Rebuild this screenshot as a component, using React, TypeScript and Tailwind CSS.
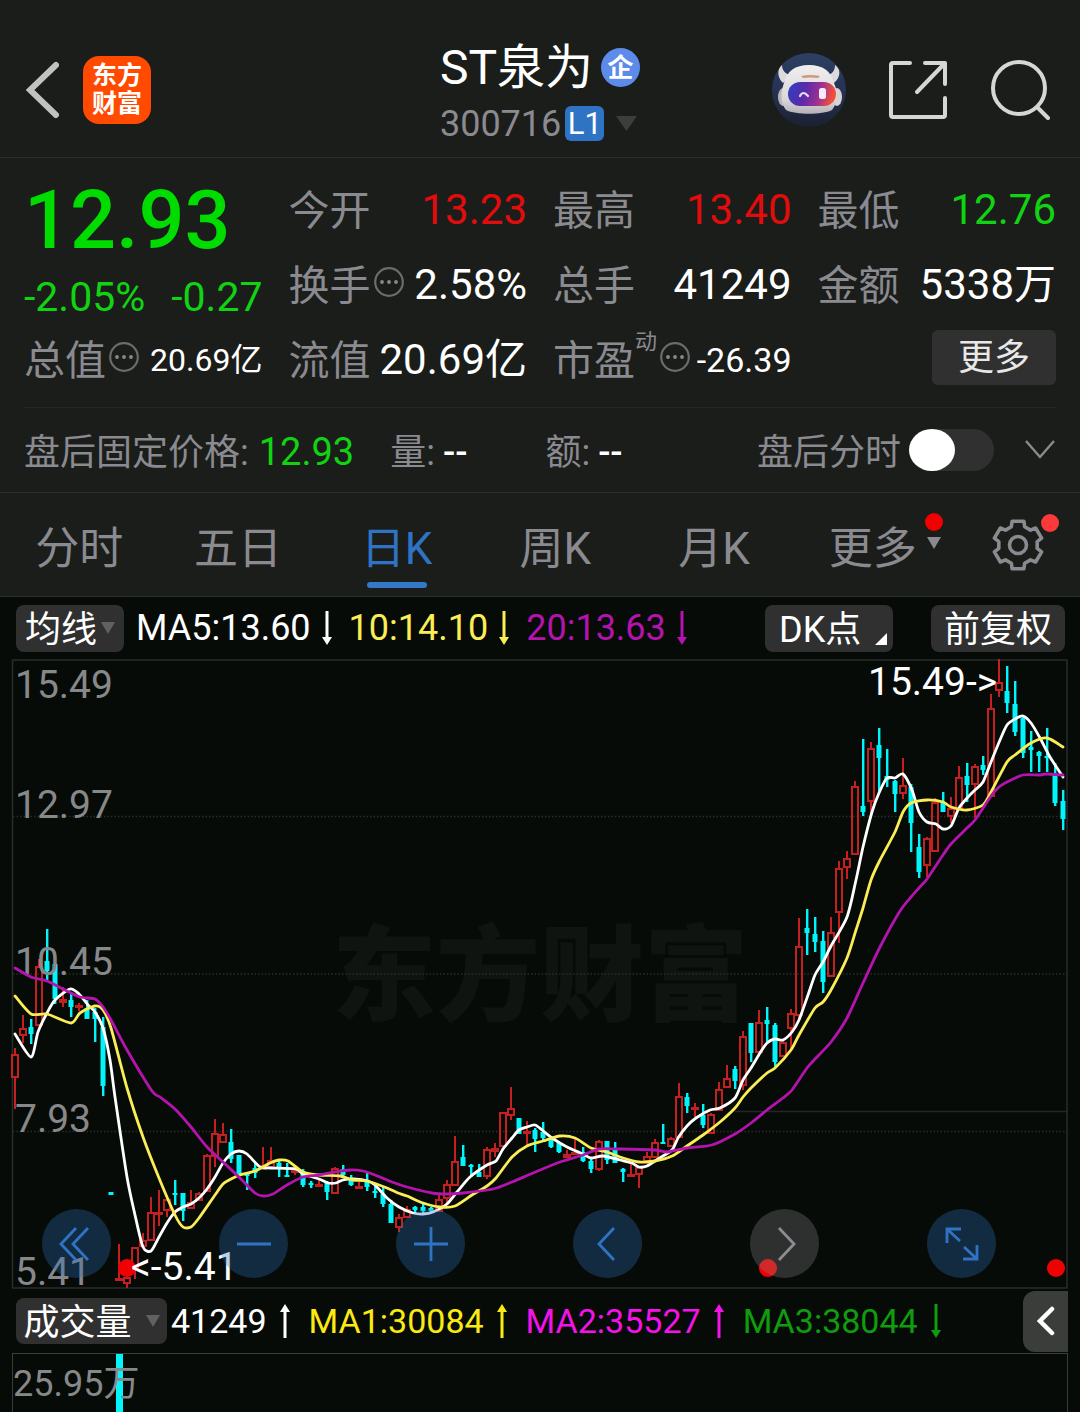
import { useState } from "react";
import type { ReactNode } from "react";

/* Each candle: kind (r = rise, c = fall), high, body top, body bottom, low */
type Candle = [string, number, number, number, number];

const CANDLES: Candle[] = [
  ["r", 1048, 1054, 1078, 1109], ["r", 1015, 1028, 1036, 1043], ["c", 1019, 1027, 1034, 1044],
  ["r", 959, 966, 1026, 1026], ["c", 929, 961, 971, 980], ["c", 964, 964, 999, 1004],
  ["r", 987, 999, 1003, 1007], ["c", 993, 1000, 1007, 1017], ["r", 1003, 1005, 1008, 1011],
  ["c", 1000, 1008, 1019, 1019], ["c", 1008, 1012, 1019, 1042], ["c", 1017, 1027, 1086, 1096],
  ["c", 1192, 1192, 1195, 1195], ["r", 1244, 1278, 1281, 1281], ["r", 1259, 1277, 1284, 1288],
  ["r", 1247, 1247, 1270, 1279], ["r", 1233, 1240, 1247, 1247], ["r", 1197, 1212, 1241, 1241],
  ["r", 1190, 1212, 1214, 1226], ["r", 1195, 1199, 1211, 1217], ["c", 1180, 1193, 1195, 1205],
  ["c", 1193, 1193, 1211, 1221], ["r", 1190, 1202, 1209, 1209], ["r", 1192, 1193, 1201, 1201],
  ["r", 1154, 1155, 1192, 1192], ["r", 1119, 1133, 1157, 1167], ["r", 1123, 1134, 1143, 1143],
  ["c", 1129, 1142, 1159, 1163], ["c", 1155, 1155, 1175, 1175], ["c", 1173, 1174, 1176, 1190],
  ["c", 1163, 1168, 1173, 1178], ["r", 1147, 1165, 1169, 1169], ["r", 1147, 1160, 1168, 1168],
  ["c", 1160, 1163, 1168, 1177], ["c", 1163, 1175, 1177, 1177], ["r", 1167, 1170, 1172, 1175],
  ["c", 1169, 1173, 1185, 1187], ["c", 1181, 1183, 1185, 1188], ["r", 1180, 1184, 1186, 1187],
  ["c", 1181, 1182, 1192, 1200], ["r", 1167, 1168, 1194, 1194], ["c", 1165, 1169, 1175, 1178],
  ["c", 1175, 1178, 1185, 1186], ["r", 1182, 1186, 1189, 1189], ["c", 1173, 1181, 1187, 1191],
  ["c", 1185, 1191, 1193, 1198], ["c", 1187, 1194, 1204, 1207], ["c", 1200, 1204, 1223, 1223],
  ["r", 1214, 1217, 1228, 1232], ["r", 1206, 1209, 1218, 1218], ["c", 1206, 1207, 1210, 1213],
  ["c", 1203, 1207, 1211, 1213], ["c", 1207, 1208, 1211, 1212], ["r", 1194, 1199, 1212, 1212],
  ["r", 1180, 1184, 1199, 1203], ["r", 1136, 1161, 1186, 1186], ["c", 1145, 1157, 1166, 1166],
  ["c", 1164, 1165, 1167, 1177], ["c", 1164, 1172, 1177, 1177], ["r", 1147, 1149, 1177, 1179],
  ["r", 1143, 1148, 1152, 1157], ["r", 1112, 1112, 1147, 1147], ["r", 1087, 1108, 1116, 1120],
  ["c", 1118, 1118, 1134, 1134], ["r", 1121, 1131, 1134, 1145], ["c", 1128, 1130, 1139, 1152],
  ["c", 1122, 1132, 1138, 1140], ["c", 1136, 1140, 1147, 1148], ["c", 1142, 1143, 1152, 1153],
  ["r", 1150, 1154, 1158, 1158], ["r", 1139, 1152, 1155, 1155], ["c", 1147, 1152, 1161, 1162],
  ["c", 1158, 1161, 1169, 1173], ["r", 1140, 1141, 1170, 1171], ["c", 1141, 1141, 1160, 1164],
  ["c", 1142, 1150, 1163, 1163], ["c", 1168, 1169, 1172, 1182], ["r", 1164, 1174, 1177, 1177],
  ["r", 1167, 1167, 1175, 1188], ["r", 1152, 1156, 1162, 1162], ["r", 1139, 1142, 1158, 1158],
  ["c", 1124, 1142, 1144, 1144], ["r", 1137, 1138, 1147, 1147], ["r", 1083, 1096, 1138, 1138],
  ["c", 1093, 1097, 1106, 1113], ["r", 1103, 1107, 1109, 1117], ["c", 1104, 1115, 1125, 1128],
  ["r", 1113, 1114, 1134, 1134], ["r", 1082, 1089, 1111, 1111], ["r", 1065, 1078, 1088, 1088],
  ["c", 1066, 1069, 1081, 1089], ["r", 1031, 1036, 1086, 1090], ["c", 1023, 1023, 1053, 1062],
  ["r", 1010, 1022, 1053, 1053], ["c", 1007, 1020, 1024, 1043], ["c", 1023, 1025, 1062, 1067],
  ["r", 1041, 1042, 1057, 1057], ["r", 1009, 1013, 1029, 1050], ["r", 918, 946, 1016, 1018],
  ["c", 909, 928, 933, 955], ["c", 917, 934, 942, 952], ["c", 931, 941, 982, 993],
  ["r", 917, 932, 977, 977], ["r", 861, 868, 913, 943], ["r", 851, 858, 868, 879],
  ["r", 781, 786, 855, 855], ["c", 739, 806, 812, 816], ["r", 742, 748, 802, 813],
  ["c", 728, 745, 758, 792], ["c", 749, 776, 780, 787], ["c", 780, 781, 794, 812],
  ["r", 758, 785, 794, 799], ["c", 784, 787, 823, 852], ["c", 834, 847, 872, 878],
  ["r", 837, 838, 866, 877], ["r", 798, 802, 852, 852], ["c", 792, 802, 812, 812],
  ["r", 797, 808, 817, 823], ["r", 766, 777, 810, 810], ["c", 763, 776, 785, 802],
  ["r", 764, 766, 785, 818], ["c", 756, 765, 770, 775], ["r", 694, 708, 797, 797],
  ["r", 659, 682, 691, 697], ["c", 666, 691, 703, 713], ["c", 681, 704, 732, 736],
  ["c", 717, 718, 753, 758], ["c", 731, 747, 750, 772], ["c", 751, 752, 756, 772],
  ["c", 728, 756, 758, 772], ["c", 763, 775, 803, 806], ["c", 790, 801, 819, 830],
];

const MA5 =
  "15,1034 31,1057 38,1032 47,1013 55,1000 70,989 79,994 88,1005 95,1012 103,1028 110,1060 115,1097 127,1177 135,1215 143,1247 151,1251 159,1237 167,1223 175,1212 183,1207 191,1204 199,1198 207,1189 215,1177 223,1163 231,1154 239,1151 247,1154 260,1167 270,1168 296,1169 303,1174 319,1179 328,1183 336,1183 343,1180 354,1179 368,1181 375,1185 387,1198 399,1207 413,1213 423,1214 433,1212 447,1204 457,1192 470,1177 487,1165 496,1161 503,1149 512,1138 519,1130 527,1127 535,1125 542,1130 552,1138 567,1147 583,1154 591,1158 603,1156 620,1160 632,1163 639,1167 647,1166 658,1159 672,1150 678,1138 687,1126 696,1118 710,1110 720,1108 735,1098 743,1080 751,1068 760,1053 767,1043 775,1039 783,1040 792,1032 799,1020 808,995 815,975 823,962 831,946 847,917 856,880 863,847 872,812 879,793 887,778 895,778 903,774 912,790 919,812 927,822 936,824 943,829 951,826 959,808 968,797 975,790 983,782 991,762 1000,740 1007,725 1015,719 1023,716 1031,723 1040,738 1050,757 1063,777";
const MA10 =
  "15,996 31,1014 47,1014 71,1023 80,1013 95,1006 103,1010 111,1028 127,1088 143,1137 159,1178 175,1215 183,1227 191,1227 199,1218 215,1195 223,1184 233,1178 240,1175 255,1171 270,1163 279,1160 288,1161 303,1172 319,1175 340,1176 353,1180 367,1181 387,1188 398,1193 407,1196 423,1203 440,1207 455,1206 472,1195 487,1186 496,1178 512,1157 527,1146 543,1141 560,1136 575,1138 591,1148 607,1152 623,1158 639,1162 655,1161 672,1156 687,1146 703,1135 720,1122 735,1108 743,1097 751,1088 767,1073 775,1068 791,1050 799,1035 815,1008 823,1002 831,990 847,958 856,930 863,908 871,880 879,862 895,832 903,812 911,803 927,800 943,802 951,807 967,810 983,805 991,792 1007,762 1015,755 1031,743 1047,738 1063,747";
const MA20 =
  "15,968 31,977 47,981 63,989 80,997 95,999 103,1007 111,1020 127,1050 152,1091 160,1097 175,1109 191,1127 207,1147 223,1162 240,1178 255,1193 263,1196 273,1194 287,1185 303,1177 319,1175 335,1172 350,1170 363,1171 375,1175 392,1182 407,1187 432,1193 447,1194 463,1193 493,1189 512,1182 533,1173 560,1162 583,1155 599,1149 620,1149 655,1150 667,1152 687,1148 712,1145 735,1134 751,1123 767,1110 783,1098 792,1090 807,1068 815,1059 831,1042 847,1018 863,983 880,947 900,911 911,897 919,888 927,879 943,855 951,844 967,828 975,820 991,796 999,787 1007,782 1023,775 1040,775 1047,774 1063,775";

/* Catmull-Rom spline through the listed points */
function smooth(points: string): string {
  const p = points.split(" ").map((s) => s.split(",").map(Number));
  let d = `M${p[0][0]} ${p[0][1]}`;
  for (let i = 0; i < p.length - 1; i++) {
    const a = p[Math.max(i - 1, 0)];
    const b = p[i];
    const c = p[i + 1];
    const e = p[Math.min(i + 2, p.length - 1)];
    d += `C${b[0] + (c[0] - a[0]) / 8} ${b[1] + (c[1] - a[1]) / 8} ${c[0] - (e[0] - b[0]) / 8} ${c[1] - (e[1] - b[1]) / 8} ${c[0]} ${c[1]}`;
  }
  return d;
}

function CandleMark({ candle, x }: { candle: Candle; x: number }) {
  const [kind, high, top, bottom, low] = candle;
  if (kind === "c") {
    return (
      <g fill="#00f6fb">
        <rect x={x - 1} y={high} width="2.4" height={Math.max(low - high, 2)} />
        <rect x={x - 2.5} y={top} width="5" height={Math.max(bottom - top, 2)} />
      </g>
    );
  }
  return (
    <g fill="none" stroke="#c4201f" strokeWidth="2">
      {top > high && <path d={`M${x} ${high}V${top}`} />}
      {low > bottom && <path d={`M${x} ${bottom}V${low}`} />}
      <rect x={x - 3} y={top + 1} width="6" height={Math.max(bottom - top - 2, 1)} />
    </g>
  );
}

function PriceChart() {
  return (
    <svg
      viewBox="12 659 1056 630"
      className="block w-full overflow-visible"
      role="img"
      aria-label="日K线图"
      fontFamily='Roboto, "Noto Sans CJK SC", sans-serif'
    >
      <text x="540" y="1013" textAnchor="middle" fontSize="104" fontWeight="900" fill="#101411">
        东方财富
      </text>
      <g stroke="#292d2a" strokeWidth="1.5" strokeDasharray="1.5 2">
        <path d="M13 816.5H1067M13 974H1067M13 1131.5H1067" />
      </g>
      <path d="M735 1111.5H1067" stroke="#242725" strokeWidth="1.5" />
      <rect x="12.5" y="660" width="1054.5" height="628" fill="none" stroke="#2a2c2a" strokeWidth="1.5" />
      {CANDLES.map((c, i) => (
        <CandleMark key={i} candle={c} x={15 + i * 8} />
      ))}
      <g fontSize="39" fill="#87888a">
        <text x="15" y="698">15.49</text>
        <text x="15" y="818">12.97</text>
        <text x="15" y="975">10.45</text>
        <text x="15" y="1132">7.93</text>
        <text x="15" y="1285">5.41</text>
      </g>
      <g fill="none" strokeWidth="2.8" strokeLinejoin="round" strokeLinecap="round">
        <path d={smooth(MA5)} stroke="#ffffff" />
        <path d={smooth(MA10)} stroke="#fbed55" />
        <path d={smooth(MA20)} stroke="#b413ae" />
      </g>
      <g fill="#f00000">
        <circle cx="127" cy="1268" r="9" />
        <circle cx="768" cy="1268" r="9" />
        <circle cx="1056" cy="1268" r="9" />
      </g>
      <g fontSize="39" fill="#ffffff">
        <text x="868" y="695">15.49-&gt;</text>
        <text x="131" y="1280">&lt;-5.41</text>
      </g>
    </svg>
  );
}

function Robot() {
  return (
    <svg viewBox="0 0 74 74" className="size-[74px]" aria-hidden="true">
      <defs>
        <linearGradient id="sky" x1="0" y1="0" x2="0" y2="1">
          <stop offset="0" stopColor="#2d3f63" />
          <stop offset="0.6" stopColor="#233150" />
          <stop offset="1" stopColor="#1c2030" />
        </linearGradient>
        <linearGradient id="visor" x1="0" y1="0" x2="1" y2="0.15">
          <stop offset="0" stopColor="#2c3fc4" />
          <stop offset="0.4" stopColor="#5a2aa8" />
          <stop offset="0.7" stopColor="#9a2f94" />
          <stop offset="1" stopColor="#f0503c" />
        </linearGradient>
        <linearGradient id="shell" x1="0" y1="0" x2="0" y2="1">
          <stop offset="0" stopColor="#f0eeee" />
          <stop offset="0.7" stopColor="#dcd8da" />
          <stop offset="1" stopColor="#b5b0b6" />
        </linearGradient>
      </defs>
      <circle cx="37" cy="37" r="37" fill="url(#sky)" />
      <path d="M10 12C5 16 5 24 11 30L21 22C14 22 10 18 10 12ZM63 12C69 16 69 24 62 30L53 22C60 22 63 18 63 12Z" fill="#dddade" />
      <ellipse cx="11" cy="44" rx="5" ry="9" fill="#b9b4ba" />
      <ellipse cx="65" cy="44" rx="5" ry="9" fill="#d8d3d6" />
      <path d="M37 12C51 12 59 18 62 30C67 41 65 51 60 57C50 62 24 62 14 57C9 51 8 41 12 30C15 18 23 12 37 12Z" fill="url(#shell)" />
      <rect x="16" y="29" width="48" height="24" rx="12" fill="url(#visor)" />
      <path d="M29 23Q38 21 48 23L46 25Q38 24 31 25Z" fill="#d09a78" />
      <path d="M28 43Q31 37 36 43" fill="none" stroke="#e8dcff" strokeWidth="2.2" strokeLinecap="round" />
      <rect x="47" y="35" width="7" height="11" rx="2.5" fill="#f7eaff" />
    </svg>
  );
}

function Gear() {
  const pts: string[] = [];
  for (let k = 0; k < 6; k++) {
    const mid = -90 + k * 60;
    [[-20, 19.5], [-14, 24.5], [14, 24.5], [20, 19.5]].forEach(([da, r]) => {
      const a = ((mid + da) * Math.PI) / 180;
      pts.push(`${(27 + r * Math.cos(a)).toFixed(1)},${(27 + r * Math.sin(a)).toFixed(1)}`);
    });
  }
  return (
    <svg viewBox="0 0 54 54" className="size-[54px]" fill="none" stroke="#8a8a90" strokeWidth="3.6" strokeLinejoin="round" aria-hidden="true">
      <polygon points={pts.join(" ")} />
      <circle cx="27" cy="27" r="8.5" />
    </svg>
  );
}

function Dots() {
  return (
    <svg viewBox="0 0 30 30" className="mb-[10px] ml-[3px] size-[30px] shrink-0" aria-hidden="true">
      <circle cx="15" cy="15" r="13.8" fill="none" stroke="#6c6c6a" strokeWidth="2.2" />
      <g fill="#8a8a8a">
        <circle cx="8" cy="15" r="1.9" />
        <circle cx="15" cy="15" r="1.9" />
        <circle cx="22" cy="15" r="1.9" />
      </g>
    </svg>
  );
}

function Arrow({ up = false }: { up?: boolean }) {
  return (
    <svg viewBox="0 0 12 34" className="h-[34px] w-3 shrink-0" fill="currentColor" aria-label={up ? "上升" : "下降"}>
      {up ? <path d="M6 0L11 8H7.5V34H4.5V8H1Z" /> : <path d="M6 34L11 26H7.5V0H4.5V26H1Z" />}
    </svg>
  );
}

function Caret({ className }: { className: string }) {
  return (
    <svg viewBox="0 0 14 12" preserveAspectRatio="none" className={className} fill="currentColor" aria-hidden="true">
      <path d="M0 0H14L7 12Z" />
    </svg>
  );
}

function Stat({ label, value, look, info, sup }: { label: string; value: string; look: string; info?: boolean; sup?: string }) {
  return (
    <div className="flex h-[75px] items-center whitespace-nowrap">
      <dt className="flex items-center pt-1 text-[41px] leading-none text-[#8a8a90]">
        {label}
        {sup && <sup className="-top-5 self-center text-[22px] leading-none">{sup}</sup>}
        {info && <Dots />}
      </dt>
      <dd className={`ml-auto leading-none ${look}`}>{value}</dd>
    </div>
  );
}

function Tool({ label, grey, children }: { label: string; grey?: boolean; children: ReactNode }) {
  return (
    <button
      type="button"
      aria-label={label}
      className={`flex size-[69px] items-center justify-center rounded-full ${grey ? "bg-[#888888]/30 text-[#8c8c92]" : "bg-[#2f6fb8]/32 text-[#2f74c4]"}`}
    >
      <svg viewBox="0 0 36 36" className="size-9" fill="none" stroke="currentColor" strokeWidth="2.8" aria-hidden="true">
        {children}
      </svg>
    </button>
  );
}

const TABS = ["分时", "五日", "日K", "周K", "月K"];

export default function App() {
  const [tab, setTab] = useState("日K");
  const [afterHours, setAfterHours] = useState(false);

  return (
    <div className="flex min-h-screen flex-col bg-[#070b08] font-[Roboto,'Noto_Sans_CJK_SC',sans-serif] text-white">
      <div className="bg-[#1a1d1a]">
        <header className="grid grid-cols-[1fr_auto_1fr] items-center border-b border-[#2c2e2c] pt-[22px] pr-[30px] pl-[26px]">
          <div className="flex h-[135px] items-center gap-6">
            <button type="button" aria-label="返回">
              <svg viewBox="0 0 33 58" className="h-[58px] w-[33px]" fill="none" stroke="#c2c2c2" strokeWidth="6" strokeLinecap="round" aria-hidden="true">
                <path d="M30 4L4 29L30 54" />
              </svg>
            </button>
            <a href="#home" aria-label="东方财富" className="flex size-[68px] flex-col items-center justify-center rounded-2xl bg-[#ff4a00] text-[25px] leading-[28px] font-bold">
              <span>东方</span>
              <span>财富</span>
            </a>
          </div>
          <div className="flex flex-col gap-[10px] pt-1 pl-1">
            <h1 className="flex items-center gap-2 text-[48px] leading-[54px]">
              ST泉为
              <span className="flex size-[39px] items-center justify-center rounded-full bg-[#5d8bea] text-[26px] leading-none font-bold">企</span>
            </h1>
            <button type="button" className="flex items-center text-[36px] leading-[38px] text-[#8a8a90]">
              300716
              <span className="ml-1 flex h-[35px] w-[39px] items-center justify-center rounded-md bg-[#2f74c4] text-[31px] leading-none text-white">L1</span>
              <Caret className="ml-3 h-[15px] w-[21px] text-[#3c3e3c]" />
            </button>
          </div>
          <div className="flex items-center justify-end gap-[42px]">
            <button type="button" aria-label="智能助手"><Robot /></button>
            <button type="button" aria-label="分享">
              <svg viewBox="0 0 60 60" className="size-[60px]" fill="none" stroke="#d6d6d6" strokeWidth="4" strokeLinecap="round" strokeLinejoin="round" aria-hidden="true">
                <path d="M22 3H5Q3 3 3 5V55Q3 57 5 57H55Q57 57 57 55V38M37 3H57V24M57 3L29 32" />
              </svg>
            </button>
            <button type="button" aria-label="搜索">
              <svg viewBox="0 0 60 60" className="size-[60px]" fill="none" stroke="#d6d6d6" strokeWidth="4" strokeLinecap="round" aria-hidden="true">
                <circle cx="29" cy="28" r="26" />
                <path d="M47 47L58 58" />
              </svg>
            </button>
          </div>
        </header>

        <dl className="mx-6 grid grid-cols-4 gap-x-[26px] border-b border-[#242725] pt-[14px] pb-[10px]">
          <div className="row-span-2" aria-label="最新价">
            <dd className="pt-1 text-[81px] leading-[90px] font-medium text-[#00dc00]">12.93</dd>
            <dd className="flex justify-between pt-[10px] text-[41px] leading-[42px] text-[#12d312]">
              <span>-2.05%</span>
              <span>-0.27</span>
            </dd>
          </div>
          <Stat label="今开" value="13.23" look="text-[42px] text-[#e30c0c]" />
          <Stat label="最高" value="13.40" look="text-[42px] text-[#e30c0c]" />
          <Stat label="最低" value="12.76" look="text-[42px] text-[#12d312]" />
          <Stat label="换手" value="2.58%" look="text-[42px] text-white" info />
          <Stat label="总手" value="41249" look="text-[42px] text-white" />
          <Stat label="金额" value="5338万" look="text-[42px] text-white" />
          <Stat label="总值" value="20.69亿" look="text-[32px] text-white" info />
          <Stat label="流值" value="20.69亿" look="text-[42px] text-white" />
          <Stat label="市盈" value="-26.39" look="text-[34px] text-white" sup="动" info />
          <div className="flex items-start justify-end pt-2">
            <button type="button" className="h-[55px] w-[124px] rounded-md bg-[#303030] text-[36px] leading-none text-[#e8e8e8]">更多</button>
          </div>
        </dl>

        <div className="flex h-[85px] items-center border-b border-[#2c2e2c] px-6 text-[36px] leading-none whitespace-nowrap text-[#8a8a90]">
          <span className="pt-[6px]">盘后固定价格:</span>
          <span className="ml-[10px] pt-1 text-[38px] text-[#12d312]">12.93</span>
          <span className="ml-9 pt-[6px]">量:</span>
          <span className="ml-2 pt-[6px] font-medium text-white">--</span>
          <span className="ml-[78px] pt-[6px]">额:</span>
          <span className="ml-2 pt-[6px] font-medium text-white">--</span>
          <label htmlFor="after-hours" className="ml-auto pt-[6px]">盘后分时</label>
          <input
            id="after-hours"
            type="checkbox"
            role="switch"
            checked={afterHours}
            onChange={(e) => setAfterHours(e.target.checked)}
            className="ml-2 h-[42px] w-[85px] appearance-none rounded-full bg-[#303030] before:block before:h-[42px] before:w-[46px] before:rounded-[50%] before:bg-white checked:before:ml-auto"
          />
          <button type="button" aria-label="展开" className="ml-[30px]">
            <svg viewBox="0 0 32 20" className="h-5 w-8" fill="none" stroke="#8a8a90" strokeWidth="2.4" aria-hidden="true">
              <path d="M2 1L16 17L30 1" />
            </svg>
          </button>
        </div>

        <nav className="flex h-[104px] items-center border-b border-[#2c2e2c] pr-[35px] text-[44px] leading-none">
          {TABS.map((t) => (
            <button
              key={t}
              type="button"
              onClick={() => setTab(t)}
              className={`relative flex h-full flex-1 items-center justify-center pt-2 ${t === tab ? "text-[#2f74c4]" : "text-[#8a8a90]"}`}
            >
              {t}
              {t === tab && <span className="absolute bottom-2 h-[6px] w-[60px] rounded-full bg-[#3478c8]" />}
            </button>
          ))}
          <button type="button" className="flex h-full flex-1 items-center justify-center pt-2 pr-2 text-[#8a8a90]">
            <span className="relative">
              更多
              <Caret className="absolute top-[10px] -right-6 h-3 w-[14px]" />
              <span className="absolute -top-[14px] -right-[26px] size-[18px] rounded-full bg-[#f00000]" />
            </span>
          </button>
          <button type="button" aria-label="设置" className="relative ml-[31px]">
            <Gear />
            <span className="absolute -top-[4px] -right-[14px] size-[18px] rounded-full bg-[#fa3a3a]" />
          </button>
        </nav>
      </div>

      <div className="flex h-[62px] items-center pr-[15px] pl-4 text-[36px] leading-none whitespace-nowrap">
        <button type="button" className="flex h-[47px] w-[108px] items-center justify-center gap-1 rounded-lg bg-[#303030]">
          <span className="pt-1">均线</span>
          <Caret className="h-3 w-[14px] text-[#616161]" />
        </button>
        <span className="ml-3 flex items-center gap-[10px]">MA5:13.60<Arrow /></span>
        <span className="ml-4 flex items-center gap-[10px] text-[#fbed55]">10:14.10<Arrow /></span>
        <span className="ml-4 flex items-center gap-[10px] text-[#b413ae]">20:13.63<Arrow /></span>
        <button type="button" className="relative ml-auto h-[47px] w-[128px] rounded-lg bg-[#303030] pt-1 pl-[14px] text-left">
          DK点
          <svg viewBox="0 0 12 12" className="absolute right-[6px] bottom-[7px] size-3" fill="#ffffff" aria-hidden="true">
            <path d="M12 0V12H0Z" />
          </svg>
        </button>
        <button type="button" className="ml-[38px] h-[47px] w-[134px] rounded-lg bg-[#303030] pt-1">前复权</button>
      </div>

      <div className="relative mx-3">
        <PriceChart />
        <div className="absolute right-[72px] bottom-[11px] left-[30px] flex justify-between">
          <Tool label="最早"><path d="M17 2L2 18L17 34M29 2L14 18L29 34" /></Tool>
          <Tool label="缩小"><path d="M1 18H35" /></Tool>
          <Tool label="放大"><path d="M1 18H35M18 1V35" /></Tool>
          <Tool label="向左"><path d="M24 2L9 18L24 34" /></Tool>
          <Tool label="向右" grey><path d="M12 2L27 18L12 34" /></Tool>
          <Tool label="全屏"><path d="M3 17V3H17M3 3L16 15M33 19V33H19M33 33L20 21" /></Tool>
        </div>
      </div>

      <div className="flex h-16 items-center pr-3 pl-4 text-[34px] leading-none whitespace-nowrap">
        <button type="button" className="flex h-[46px] w-[151px] items-center justify-center gap-[14px] rounded-lg bg-[#303030] text-[36px]">
          <span className="pt-1">成交量</span>
          <Caret className="h-3 w-[14px] text-[#616161]" />
        </button>
        <span className="ml-1 flex items-center gap-3">41249<Arrow up /></span>
        <span className="ml-[18px] flex items-center gap-3 text-[#fbea12]">MA1:30084<Arrow up /></span>
        <span className="ml-[18px] flex items-center gap-3 text-[#f512e8]">MA2:35527<Arrow up /></span>
        <span className="ml-[18px] flex items-center gap-3 text-[#0f9d0f]">MA3:38044<Arrow /></span>
        <button type="button" aria-label="展开侧栏" className="ml-auto flex h-[61px] w-[45px] items-center justify-center rounded-l-xl bg-[#3b3d3b]">
          <svg viewBox="0 0 18 30" className="h-[30px] w-[18px]" fill="none" stroke="#ffffff" strokeWidth="4.5" strokeLinecap="round" aria-hidden="true">
            <path d="M15 3L3 15L15 27" />
          </svg>
        </button>
      </div>

      <div className="relative mx-3 min-h-[59px] flex-1 border border-b-0 border-[#3a3c3a]">
        <span className="absolute inset-y-0 left-[103px] w-[7px] bg-[#00f6fb]" />
        <p className="relative pt-3 text-[36px] leading-[36px] text-[#87888a]">25.95万</p>
      </div>
    </div>
  );
}
